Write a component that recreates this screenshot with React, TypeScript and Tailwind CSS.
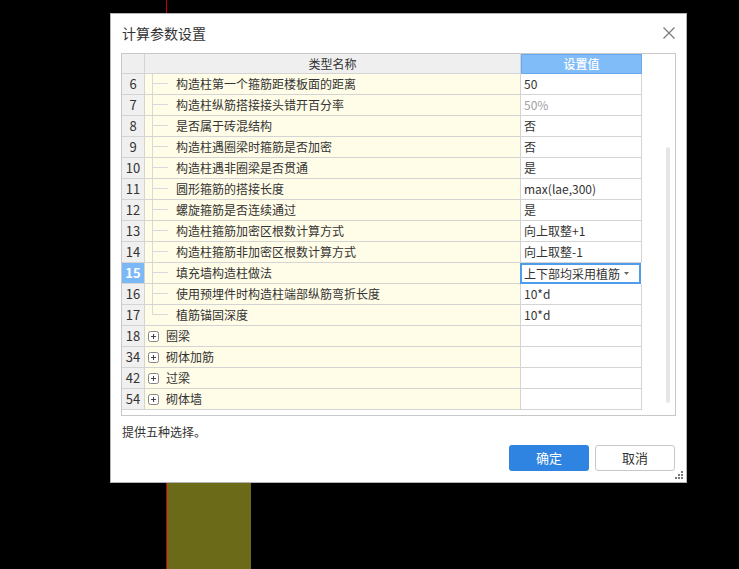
import React from 'react';

const leafRows = [
  { n: 6, name: '构造柱第一个箍筋距楼板面的距离', value: '50' },
  { n: 7, name: '构造柱纵筋搭接接头错开百分率', value: '50%', muted: true },
  { n: 8, name: '是否属于砖混结构', value: '否' },
  { n: 9, name: '构造柱遇圈梁时箍筋是否加密', value: '否' },
  { n: 10, name: '构造柱遇非圈梁是否贯通', value: '是' },
  { n: 11, name: '圆形箍筋的搭接长度', value: 'max(lae,300)' },
  { n: 12, name: '螺旋箍筋是否连续通过', value: '是' },
  { n: 13, name: '构造柱箍筋加密区根数计算方式', value: '向上取整+1' },
  { n: 14, name: '构造柱箍筋非加密区根数计算方式', value: '向上取整-1' },
  { n: 15, name: '填充墙构造柱做法', value: '上下部均采用植筋', selected: true },
  { n: 16, name: '使用预埋件时构造柱端部纵筋弯折长度', value: '10*d' },
  { n: 17, name: '植筋锚固深度', value: '10*d' },
];

const groupRows = [
  { n: 18, name: '圈梁' },
  { n: 34, name: '砌体加筋' },
  { n: 42, name: '过梁' },
  { n: 54, name: '砌体墙' },
];

const font = { fontFamily: '"Noto Sans CJK SC", "Microsoft YaHei", sans-serif' };

function NumCell({ n, selected }: { n: number; selected?: boolean }) {
  return (
    <div
      className={
        selected
          ? 'w-[23px] shrink-0 border-r border-b border-[#d4d4d4] bg-[#7db8f6] text-white font-bold flex items-center justify-center text-[13px]'
          : 'w-[23px] shrink-0 border-r border-b border-[#d4d4d4] bg-[#f0f0f0] text-[#333] flex items-center justify-center text-[13px]'
      }
    >
      {n}
    </div>
  );
}

function LeafRow({ row, last }: { row: (typeof leafRows)[number]; last: boolean }) {
  return (
    <div className="flex h-[21px]">
      <NumCell n={row.n} selected={row.selected} />
      {/* name column with tree lines */}
      <div className="w-[376px] shrink-0 border-r border-b border-[#d4d4d4] bg-[#fffce7] flex items-stretch pl-[7px]">
        <div className="w-[24px] shrink-0 flex flex-col">
          <div className="h-[10px] w-[16px] border-l border-b border-[#d9d9d9]" />
          <div className={last ? 'flex-1' : 'flex-1 border-l border-[#d9d9d9]'} />
        </div>
        <span className="text-[12px] text-[#333] leading-[20px] whitespace-nowrap">{row.name}</span>
      </div>
      {row.selected ? (
        <div className="w-[121px] shrink-0 border-2 border-[#4d9deb] -ml-[1px] bg-white flex items-center justify-between pl-[2px] pr-[10px]">
          <span className="text-[12px] text-[#333] whitespace-nowrap">{row.value}</span>
          <svg width="5" height="3" viewBox="0 0 5 3">
            <path d="M0 0 L5 0 L2.5 3 Z" fill="#666" />
          </svg>
        </div>
      ) : (
        <div className="w-[121px] shrink-0 border-r border-b border-[#d4d4d4] bg-white flex items-center pl-[3px]">
          <span className={row.muted ? 'text-[12px] text-[#a0a0a0]' : 'text-[12px] text-[#333] whitespace-nowrap'}>
            {row.value}
          </span>
        </div>
      )}
    </div>
  );
}

function GroupRow({ row }: { row: (typeof groupRows)[number] }) {
  return (
    <div className="flex h-[21px]">
      <NumCell n={row.n} />
      <div className="w-[376px] shrink-0 border-r border-b border-[#d4d4d4] bg-[#fffce7] flex items-center pl-[3px]">
        <svg width="11" height="11" viewBox="0 0 11 11" className="shrink-0">
          <rect x="0.5" y="0.5" width="10" height="10" rx="2" fill="#fff" stroke="#858585" />
          <path d="M3 5.5 H8 M5.5 3 V8" stroke="#444" strokeWidth="1" />
        </svg>
        <span className="ml-[7px] text-[12px] text-[#333] whitespace-nowrap">{row.name}</span>
      </div>
      <div className="w-[121px] shrink-0 border-r border-b border-[#d4d4d4] bg-white" />
    </div>
  );
}

export default function App() {
  return (
    <div className="relative w-[739px] h-[569px] bg-black overflow-hidden" style={font}>
      {/* canvas behind the dialog */}
      <div className="absolute left-[166px] top-0 w-[1px] h-full bg-[#c40000]" />
      <div className="absolute left-[167px] top-[300px] w-[84px] bottom-0 bg-[#6b6a19]" />

      {/* dialog */}
      <div className="absolute left-[110px] top-[13px] w-[577px] h-[470px] bg-white border border-[#b4b4b4] flex flex-col px-[10px]">
        <div className="h-[39px] shrink-0 flex items-center justify-between">
          <span className="ml-[1px] text-[14px] text-[#333]">计算参数设置</span>
          <svg width="12" height="12" viewBox="0 0 12 12" className="mt-[-1px] mr-[1px]">
            <path d="M0.5 0.5 L11.5 11.5 M11.5 0.5 L0.5 11.5" stroke="#7a7a7a" strokeWidth="1.2" />
          </svg>
        </div>

        {/* table */}
        <div className="h-[363px] shrink-0 border border-[#c8c8c8] flex">
          <div className="w-[520px] shrink-0 flex flex-col">
            <div className="flex h-[20px]">
              <div className="w-[23px] shrink-0 border-r border-b border-[#d4d4d4] bg-[#efefef]" />
              <div className="w-[376px] shrink-0 border-r border-b border-[#d4d4d4] bg-[#efefef] flex items-center justify-center text-[12px] text-[#333]">
                类型名称
              </div>
              <div className="w-[121px] shrink-0 border border-[#6aa9ee] bg-[#80bcf8] flex items-center justify-center text-[12px] text-white font-medium">
                设置值
              </div>
            </div>
            {leafRows.map((row, i) => (
              <LeafRow key={row.n} row={row} last={i === leafRows.length - 1} />
            ))}
            {groupRows.map((row) => (
              <GroupRow key={row.n} row={row} />
            ))}
          </div>
          <div className="flex-1 flex justify-end pr-[5px] pt-[93px]">
            <div className="w-[4px] h-[256px] rounded-full bg-[#e6e6e6]" />
          </div>
        </div>

        <div className="mt-[6px] ml-[1px] h-[20px] flex items-center text-[12px] text-[#333]">提供五种选择。</div>

        <div className="mt-[3px] mr-[1px] flex justify-end gap-[6px]">
          <button className="w-[80px] h-[26px] rounded-[3px] bg-[#2f83e1] text-white text-[13px]">确定</button>
          <button className="w-[80px] h-[26px] rounded-[3px] bg-white border border-[#c8c8c8] text-[#333] text-[13px]">取消</button>
        </div>

        {/* resize grip */}
        <svg width="9" height="9" viewBox="0 0 9 9" className="absolute right-[2px] bottom-[2px]">
          <rect x="6" y="0" width="2" height="2" fill="#777" />
          <rect x="3" y="3" width="2" height="2" fill="#777" />
          <rect x="6" y="3" width="2" height="2" fill="#777" />
          <rect x="0" y="6" width="2" height="2" fill="#777" />
          <rect x="3" y="6" width="2" height="2" fill="#777" />
          <rect x="6" y="6" width="2" height="2" fill="#777" />
        </svg>
      </div>
    </div>
  );
}
